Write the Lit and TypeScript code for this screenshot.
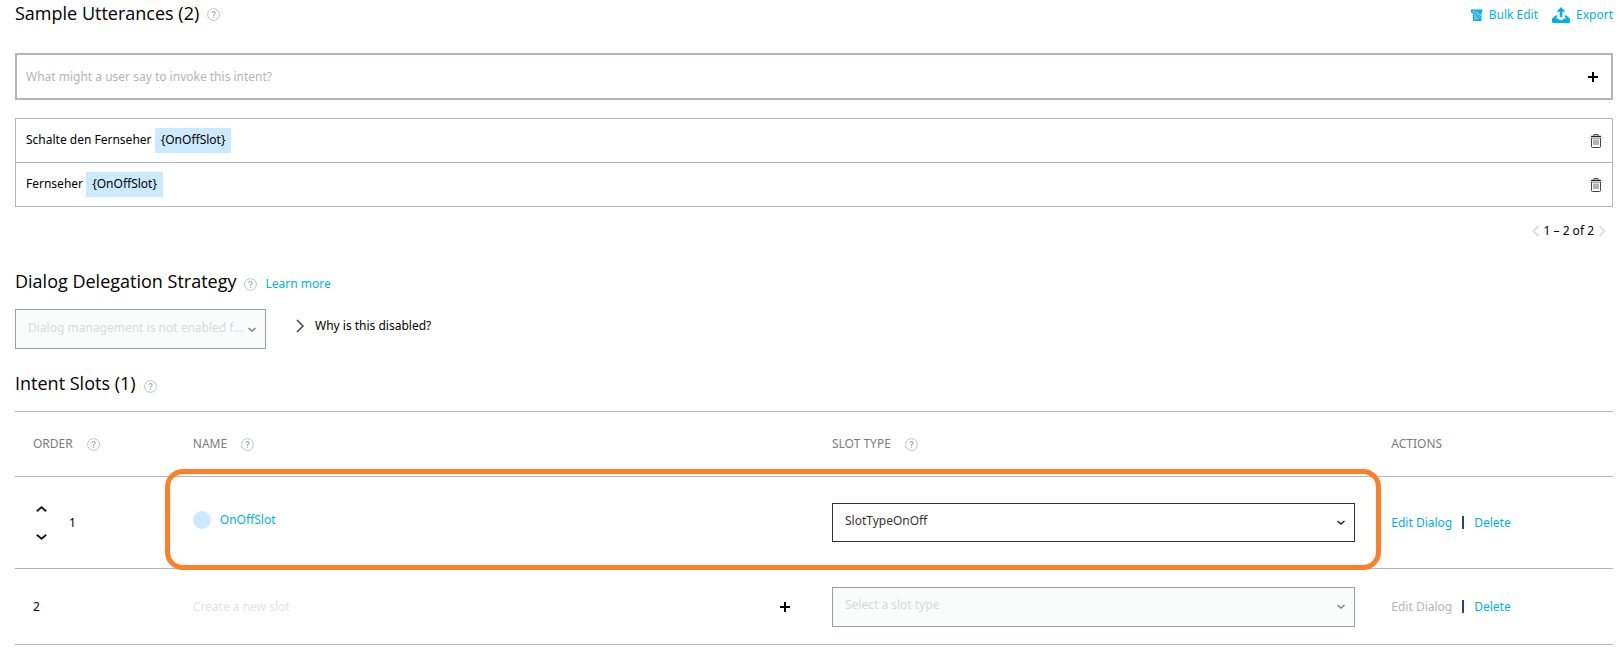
import { LitElement, html, css, svg, nothing } from "lit";
import { customElement, property } from "lit/decorators.js";

@customElement("help-tip")
class HelpTip extends LitElement {
  @property() label = "Help";

  static styles = css`
    :host {
      display: inline-flex;
    }
    .tip {
      display: flex;
      margin: 0;
      padding: 0;
      border: 0;
      background: none;
      cursor: help;
    }
  `;

  render() {
    return html`<button class="tip" type="button" aria-label=${this.label}>
      <svg width="13" height="13" viewBox="0 0 13 13" fill="none">
        <circle cx="6.5" cy="6.5" r="5.9" stroke="#b4bcbc" stroke-width="0.9" />
        <path d="M4.9 4.9C4.9 3.1 8.1 3.1 8.1 4.9C8.1 6 6.6 6.1 6.6 7.7" stroke="#7f8787" stroke-width="1" />
        <path d="M6.1 8.7h1v1h-1z" fill="#7f8787" />
      </svg>
    </button>`;
  }
}

const plusIcon = svg`<svg width="10" height="10" viewBox="0 0 10 10"><path d="M0 5h10M5 0v10" stroke="#000" stroke-width="2" /></svg>`;

const trashIcon = svg`<svg width="10" height="14" viewBox="0 0 10 14" fill="none">
  <path d="M3 2V0.5h4V2" stroke="#555" stroke-width="1" />
  <path d="M0 2.5h10" stroke="#222" stroke-width="1.4" />
  <path d="M0.5 4v8.5q0 1 1 1h7q1 0 1-1V4" stroke="#444" stroke-width="1" />
  <path d="M1 4.5h8" stroke="#aaa" stroke-width="1" />
  <path d="M3 5.5v5.5M5 5.5v5.5M7 5.5v5.5" stroke="#555" stroke-width="0.9" />
</svg>`;

const bulkEditIcon = svg`<svg width="12" height="12" viewBox="0 0 12 12">
  <path d="M0 0.5h11.5L11 3.2L10.4 4V12H2V4.4L0 3.4z" fill="#00b0e6" />
  <path d="M1.6 2.4L4.4 3L9 8.6M2.6 4.6L7.8 10.4M3 7.2L5.6 10.2H3M5.6 2.4L10 7" stroke="#fff" stroke-width="0.6" fill="none" />
</svg>`;

const exportIcon = svg`<svg width="18" height="16" viewBox="0 0 18 16" fill="#00b0e6">
  <path d="M9 0L13.4 4.8H10.3V10H7.7V4.8H4.6z" />
  <path d="M3.4 8.6h2.4L4 11.6h2.2q0.5 1.6 2.8 1.6t2.8-1.6H14l-1.8-3h2.4L18 11.8V14.4Q18 16 16.4 16H1.6Q0 16 0 14.4V11.8z" />
</svg>`;

const chevron = (d: string, w: number, h: number, color: string, stroke: number) =>
  svg`<svg width=${w} height=${h} viewBox="0 0 ${w} ${h}" fill="none"><path d=${d} stroke=${color} stroke-width=${stroke} /></svg>`;

@customElement("app-root")
class AppRoot extends LitElement {
  static styles = css`
    :host {
      display: block;
      box-sizing: border-box;
      padding: 0 6px 24px 15px;
      background: #fff;
      color: #000;
      font: 12px/20px "Noto Sans", "Open Sans", sans-serif;
    }
    * {
      box-sizing: border-box;
    }
    button,
    input,
    select {
      margin: 0;
      padding: 0;
      border: 0;
      background: none;
      color: inherit;
      font: inherit;
    }
    button {
      cursor: pointer;
    }
    a,
    .link {
      color: #00b0e6;
      text-decoration: none;
    }
    h2 {
      margin: 0;
      padding-bottom: 2px;
      font-family: "Open Sans", "Noto Sans", sans-serif;
      font-size: 18px;
      line-height: 26px;
      font-weight: 400;
    }
    .head {
      display: flex;
      align-items: center;
      gap: 8px;
    }
    .lowered {
      padding-top: 4px;
    }
    .tools {
      display: flex;
      gap: 14px;
      margin-left: auto;
      padding-top: 2px;
    }
    .tool {
      display: flex;
      align-items: center;
      gap: 6px;
    }
    .new-utterance {
      display: flex;
      align-items: center;
      height: 47px;
      margin-top: 25px;
      padding: 0 13px 0 9px;
      border: 2px solid #b3b3bd;
    }
    .new-utterance input {
      flex: 1;
      height: 100%;
      outline: none;
    }
    input::placeholder {
      color: #b3b3bd;
      opacity: 1;
    }
    .icon-button {
      display: flex;
    }
    .utterances {
      margin: 18px 0 0;
      padding: 0;
      list-style: none;
      border: 1px solid #b3b3bd;
    }
    .utterance {
      display: flex;
      align-items: center;
      justify-content: space-between;
      height: 43px;
      padding: 0 11px 0 10px;
    }
    .utterance + .utterance {
      height: 44px;
      border-top: 1px solid #b3b3bd;
    }
    .slot-chip {
      display: inline-block;
      padding: 2px 6px 3px;
      background: #cceaff;
    }
    .pager {
      display: flex;
      align-items: center;
      justify-content: flex-end;
      gap: 4px;
      margin-top: 14px;
      padding-right: 7px;
    }
    .strategy-head {
      margin-top: 27px;
    }
    .strategy {
      display: flex;
      gap: 30px;
      margin-top: 13px;
    }
    .strategy .picker {
      width: 251px;
    }
    .why {
      display: flex;
      align-items: center;
      gap: 11px;
      height: 34px;
    }
    .picker {
      display: grid;
      align-items: center;
    }
    .picker select,
    .picker svg {
      grid-area: 1 / 1;
    }
    .picker select {
      width: 100%;
      height: 39px;
      padding: 0 17px 3px 12px;
      border: 1px solid #333;
      border-radius: 0;
      appearance: none;
      color: #333;
      opacity: 1;
      text-overflow: ellipsis;
    }
    .picker select:disabled {
      height: 40px;
      border-color: #999f9f;
      background: #fafbfb;
      color: #d5dbdb;
    }
    .picker svg {
      justify-self: end;
      margin-right: 10px;
      pointer-events: none;
    }
    .slots-head {
      margin-top: 21px;
    }
    .slots {
      width: 100%;
      margin-top: 13px;
      border-collapse: collapse;
      table-layout: fixed;
    }
    .slots tr {
      border-top: 1px solid #b3b3bd;
      border-bottom: 1px solid #b3b3bd;
    }
    .slots th,
    .slots td {
      padding: 0 18px;
      text-align: left;
      font-weight: 400;
    }
    .slots th {
      height: 65px;
      color: #7b7b7b;
    }
    .order {
      width: 10%;
    }
    .name {
      width: 40%;
    }
    .type {
      width: 35%;
    }
    .cell {
      display: flex;
      align-items: center;
      gap: 14px;
    }
    .filled {
      position: relative;
    }
    .filled td {
      height: 92px;
    }
    .ring {
      position: absolute;
      inset: -9px 232px -2px 150px;
      border: 5px solid #ff7f27;
      border-radius: 18px;
      pointer-events: none;
    }
    .empty td {
      height: 76px;
    }
    .movers {
      display: grid;
      gap: 22px;
      padding: 0 8px 0 3px;
    }
    .slot-name {
      display: flex;
      align-items: center;
      gap: 9px;
      padding-bottom: 6px;
    }
    .dot {
      width: 18px;
      height: 18px;
      border-radius: 50%;
      background: #cceaff;
    }
    .create {
      display: flex;
      align-items: center;
      padding-right: 6px;
    }
    .create input {
      flex: 1;
      min-width: 0;
      outline: none;
    }
    .create input::placeholder {
      color: #e3e3e3;
    }
    .actions {
      display: flex;
      align-items: center;
      gap: 10px;
      white-space: nowrap;
    }
    .bar {
      width: 2px;
      height: 13px;
      background: #24467c;
    }
    .link:disabled {
      color: #aab7b8;
      cursor: default;
    }
  `;

  private utterances = ["Schalte den Fernseher", "Fernseher"];

  private header(label: string, cls: string, help = true) {
    return html`<th class=${cls} scope="col">
      <div class="cell">
        <span>${label}</span>
        ${help ? html`<help-tip label="Help: ${label}"></help-tip>` : nothing}
      </div>
    </th>`;
  }

  private picker(label: string, value: string, disabled: boolean) {
    return html`<div class="picker">
      <select aria-label=${label} ?disabled=${disabled}>
        <option>${value}</option>
      </select>
      ${chevron("M0.5 1L4 4L7.5 1", 8, 5, disabled ? "#7b7b7b" : "#222", 1.4)}
    </div>`;
  }

  private actions(disabled: boolean) {
    return html`<div class="actions">
      <button class="link" type="button" ?disabled=${disabled}>Edit Dialog</button>
      <span class="bar"></span>
      <button class="link" type="button">Delete</button>
    </div>`;
  }

  render() {
    return html`
      <section>
        <div class="head">
          <h2>Sample Utterances (2)</h2>
          <help-tip label="Help: Sample Utterances"></help-tip>
          <div class="tools">
            <button class="tool link" type="button">${bulkEditIcon}<span>Bulk Edit</span></button>
            <button class="tool link" type="button">${exportIcon}<span>Export</span></button>
          </div>
        </div>
        <div class="new-utterance">
          <input
            type="text"
            aria-label="New utterance"
            placeholder="What might a user say to invoke this intent?"
          />
          <button class="icon-button" type="button" aria-label="Add utterance">${plusIcon}</button>
        </div>
        <ul class="utterances">
          ${this.utterances.map(
            (text) => html`<li class="utterance">
              <span>${text} <span class="slot-chip">{OnOffSlot}</span></span>
              <button class="icon-button" type="button" aria-label="Delete utterance">${trashIcon}</button>
            </li>`
          )}
        </ul>
        <div class="pager">
          <button class="icon-button" type="button" aria-label="Previous page" disabled>
            ${chevron("M6.5 1L1.5 6L6.5 11", 8, 12, "#dedee2", 2)}
          </button>
          <span>1 – 2 of 2</span>
          <button class="icon-button" type="button" aria-label="Next page" disabled>
            ${chevron("M1.5 1L6.5 6L1.5 11", 8, 12, "#dedee2", 2)}
          </button>
        </div>
      </section>

      <section>
        <div class="head strategy-head">
          <h2>Dialog Delegation Strategy</h2>
          <help-tip class="lowered" label="Help: Dialog Delegation Strategy"></help-tip>
          <a class="lowered" href="#learn">Learn more</a>
        </div>
        <div class="strategy">
          ${this.picker("Dialog delegation strategy", "Dialog management is not enabled for this intent", true)}
          <button class="why" type="button">
            ${chevron("M1 1L7 7L1 13", 8, 14, "#444", 1.5)}<span>Why is this disabled?</span>
          </button>
        </div>
      </section>

      <section>
        <div class="head slots-head">
          <h2>Intent Slots (1)</h2>
          <help-tip class="lowered" label="Help: Intent Slots"></help-tip>
        </div>
        <table class="slots">
          <thead>
            <tr>
              ${this.header("ORDER", "order")} ${this.header("NAME", "name")}
              ${this.header("SLOT TYPE", "type")} ${this.header("ACTIONS", "act", false)}
            </tr>
          </thead>
          <tbody>
            <tr class="filled">
              <td>
                <div class="ring"></div>
                <div class="cell">
                  <div class="movers">
                    <button class="icon-button" type="button" aria-label="Move up">
                      ${chevron("M0.8 5.2L5.5 1.2L10.2 5.2", 11, 6, "#111", 1.8)}
                    </button>
                    <button class="icon-button" type="button" aria-label="Move down">
                      ${chevron("M0.8 0.8L5.5 4.8L10.2 0.8", 11, 6, "#111", 1.8)}
                    </button>
                  </div>
                  <span>1</span>
                </div>
              </td>
              <td>
                <div class="slot-name"><span class="dot"></span><a href="#slot">OnOffSlot</a></div>
              </td>
              <td>${this.picker("Slot type of OnOffSlot", "SlotTypeOnOff", false)}</td>
              <td>${this.actions(false)}</td>
            </tr>
            <tr class="empty">
              <td>2</td>
              <td>
                <div class="create">
                  <input type="text" aria-label="New slot name" placeholder="Create a new slot" />
                  <button class="icon-button" type="button" aria-label="Add slot">${plusIcon}</button>
                </div>
              </td>
              <td>${this.picker("Slot type of new slot", "Select a slot type", true)}</td>
              <td>${this.actions(true)}</td>
            </tr>
          </tbody>
        </table>
      </section>
    `;
  }
}
